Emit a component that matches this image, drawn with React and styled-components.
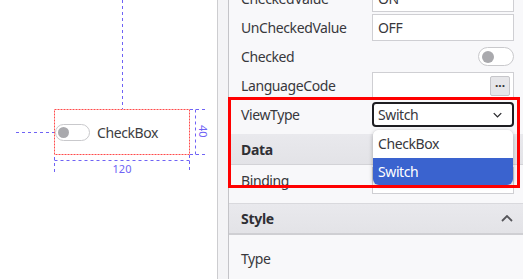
import React from 'react'
import styled, { createGlobalStyle } from 'styled-components';

const GlobalStyle = createGlobalStyle`
    html, body {
        margin: 0;
        padding: 0;
        overflow: hidden;
    }
    body {
        font-family: "Noto Sans", "Liberation Sans", sans-serif;
        background: #fff;
    }
`;

const GUIDE = '#6f63f5';

function Chevron({ up }) {
    return (
        <svg width="12" height="7" viewBox="0 0 12 7">
            <path d={up ? 'M1 6l5-5 5 5' : 'M1 1l5 5 5-5'} fill="none" stroke="currentColor" strokeWidth="1.8" />
        </svg>
    );
}

function Guides() {
    return (
        <GuideLayer width="217" height="279">
            <g fill="none" stroke={GUIDE} strokeWidth="1" strokeDasharray="3 3">
                <line x1="122.5" y1="0" x2="122.5" y2="109" />
                <line x1="16" y1="132.5" x2="54" y2="132.5" />
                <line x1="54.5" y1="160.5" x2="189.5" y2="160.5" />
                <line x1="54.5" y1="157" x2="54.5" y2="173" />
                <line x1="189.5" y1="155" x2="189.5" y2="173" />
                <line x1="195.5" y1="109.5" x2="195.5" y2="154.5" />
                <line x1="190" y1="109.5" x2="206" y2="109.5" />
                <line x1="190" y1="154.5" x2="206" y2="154.5" />
            </g>
            <rect x="54.5" y="109.5" width="135" height="45" fill="none" stroke="#ff4b4b" strokeWidth="1" strokeDasharray="2 1" />
        </GuideLayer>
    );
}

function Toggle({ small }) {
    return (
        <ToggleTrack small={small}>
            <ToggleKnob small={small} />
        </ToggleTrack>
    );
}

export default function App() {
    return (
        <Screen>
            <GlobalStyle />
            <Canvas>
                <Guides />
                <Widget>
                    <Toggle small />
                    <WidgetText>CheckBox</WidgetText>
                </Widget>
                <WidthLabel>120</WidthLabel>
                <HeightLabel>40</HeightLabel>
            </Canvas>
            <Splitter />
            <Panel>
                <PanelBody>
                    <SectionBody>
                        <Row>
                            <Label>CheckedValue</Label>
                            <Field>ON</Field>
                        </Row>
                        <Row>
                            <Label>UnCheckedValue</Label>
                            <Field>OFF</Field>
                        </Row>
                        <Row>
                            <Label>Checked</Label>
                            <ToggleCell><Toggle /></ToggleCell>
                        </Row>
                        <Row>
                            <Label>LanguageCode</Label>
                            <Field tall>
                                <MoreButton>···</MoreButton>
                            </Field>
                        </Row>
                        <Row>
                            <Label>ViewType</Label>
                            <Select focused>
                                Switch
                                <Chevron />
                            </Select>
                        </Row>
                    </SectionBody>
                    <SectionHeader>Data</SectionHeader>
                    <SectionBody top={1} bottom={8}>
                        <Row>
                            <Label>Binding</Label>
                            <Select>
                                <span />
                                <Chevron />
                            </Select>
                        </Row>
                    </SectionBody>
                    <SectionHeader divided>
                        Style
                        <HeaderIcon><Chevron up /></HeaderIcon>
                    </SectionHeader>
                    <SectionBody top={9}>
                        <Row>
                            <Label>Type</Label>
                        </Row>
                    </SectionBody>
                </PanelBody>
                <OptionList>
                    <Option>CheckBox</Option>
                    <Option selected>Switch</Option>
                </OptionList>
            </Panel>
            <Highlight />
        </Screen>
    );
}

const Screen = styled.div`
    position: relative;
    display: flex;
    width: 523px;
    height: 279px;
    overflow: hidden;
`;

const Canvas = styled.div`
    position: relative;
    width: 217px;
    flex-shrink: 0;
    background: #fff;
    border-right: 1px solid #cdcdd0;
`;

const GuideLayer = styled.svg`
    position: absolute;
    left: 0;
    top: 0;
`;

const Widget = styled.div`
    position: absolute;
    left: 55px;
    top: 122px;
    display: flex;
    align-items: center;
    gap: 7px;
    height: 21px;
`;

const WidgetText = styled.span`
    font-size: 14px;
    letter-spacing: -0.4px;
    color: #3d3d42;
`;

const WidthLabel = styled.div`
    position: absolute;
    left: 54px;
    top: 161px;
    width: 136px;
    text-align: center;
    font-size: 11px;
    color: ${GUIDE};
`;

const HeightLabel = styled.div`
    position: absolute;
    left: 198px;
    top: 125px;
    writing-mode: vertical-rl;
    font-size: 11px;
    line-height: 10px;
    color: ${GUIDE};
`;

const ToggleTrack = styled.div`
    box-sizing: border-box;
    width: ${p => (p.small ? 35 : 36)}px;
    height: ${p => (p.small ? 17 : 19)}px;
    border: 1px solid #c9c9cc;
    border-radius: 10px;
    background: #fff;
    display: flex;
    align-items: center;
    padding-left: ${p => (p.small ? 2 : 3)}px;
`;

const ToggleKnob = styled.div`
    width: ${p => (p.small ? 11 : 12)}px;
    height: ${p => (p.small ? 11 : 12)}px;
    border-radius: 50%;
    background: #a9a9ad;
`;

const Splitter = styled.div`
    width: 10px;
    flex-shrink: 0;
    background: #f4f4f6;
    border-right: 1px solid #c4c4c8;
`;

const Panel = styled.div`
    position: relative;
    flex: 1;
    background: #f8f8fa;
    overflow: hidden;
`;

const PanelBody = styled.div`
    margin-top: -16px;
`;

const SectionBody = styled.div`
    padding-top: ${p => p.top || 0}px;
    padding-bottom: ${p => (p.bottom === undefined ? 5 : p.bottom)}px;
`;

const Row = styled.div`
    display: grid;
    grid-template-columns: 131px 142px;
    align-items: center;
    height: 29px;
    padding-left: 12px;
`;

const Label = styled.div`
    font-size: 14px;
    letter-spacing: -0.4px;
    color: #38383d;
`;

const Field = styled.div`
    box-sizing: border-box;
    height: ${p => (p.tall ? 28 : 27)}px;
    display: flex;
    align-items: center;
    justify-content: space-between;
    padding: 0 3px 0 5px;
    background: #fff;
    border: 1px solid #cfcfd3;
    font-size: 14px;
    letter-spacing: -0.4px;
    color: #38383d;
`;

const MoreButton = styled.div`
    margin-left: auto;
    box-sizing: border-box;
    width: 20px;
    height: 20px;
    display: flex;
    align-items: center;
    justify-content: center;
    background: #e6e6e9;
    border: 1px solid #c6c6ca;
    border-radius: 2px;
    font-size: 12px;
    font-weight: 700;
    letter-spacing: 0;
    color: #333;
`;

const Select = styled.div`
    box-sizing: border-box;
    height: ${p => (p.focused ? 25 : 27)}px;
    display: flex;
    align-items: center;
    justify-content: space-between;
    padding: 0 10px 0 ${p => (p.focused ? 4 : 5)}px;
    background: #fff;
    border: ${p => (p.focused ? '2px solid #1e1e22' : '1px solid #cfcfd3')};
    border-radius: ${p => (p.focused ? 4 : 0)}px;
    font-size: 14px;
    letter-spacing: -0.4px;
    color: #38383d;

    svg {
        width: 9px;
        height: 6px;
        color: #2a2a2e;
    }
`;

const ToggleCell = styled.div`
    display: flex;
    justify-content: flex-end;
`;

const SectionHeader = styled.div`
    box-sizing: border-box;
    height: ${p => (p.divided ? 32 : 31)}px;
    display: flex;
    align-items: center;
    justify-content: space-between;
    padding: 0 10px 0 12px;
    background: linear-gradient(#e9e9ed, #e3e3e7);
    border-top: ${p => (p.divided ? '1px solid #d9d9dd' : '0')};
    border-bottom: ${p => (p.divided ? '2px solid #cfcfd3' : '1px solid #d3d3d7')};
    font-size: 14px;
    font-weight: 700;
    letter-spacing: -0.3px;
    color: #2f2f34;
`;

const HeaderIcon = styled.span`
    display: flex;
    color: #55555a;
`;

const OptionList = styled.div`
    position: absolute;
    left: 144px;
    top: 130px;
    width: 140px;
    background: #fff;
    border-radius: 6px;
    box-shadow: 0 1px 4px rgba(0, 0, 0, 0.3);
    overflow: hidden;
`;

const Option = styled.div`
    height: 27.5px;
    display: flex;
    align-items: center;
    padding-left: 5px;
    font-size: 14px;
    letter-spacing: -0.4px;
    background: ${p => (p.selected ? '#3a63cf' : '#fff')};
    color: ${p => (p.selected ? '#fff' : '#38383d')};
`;

const Highlight = styled.div`
    position: absolute;
    left: 228px;
    top: 97px;
    width: 292px;
    height: 91px;
    box-sizing: border-box;
    border: 3px solid #ff0000;
    pointer-events: none;
`;
